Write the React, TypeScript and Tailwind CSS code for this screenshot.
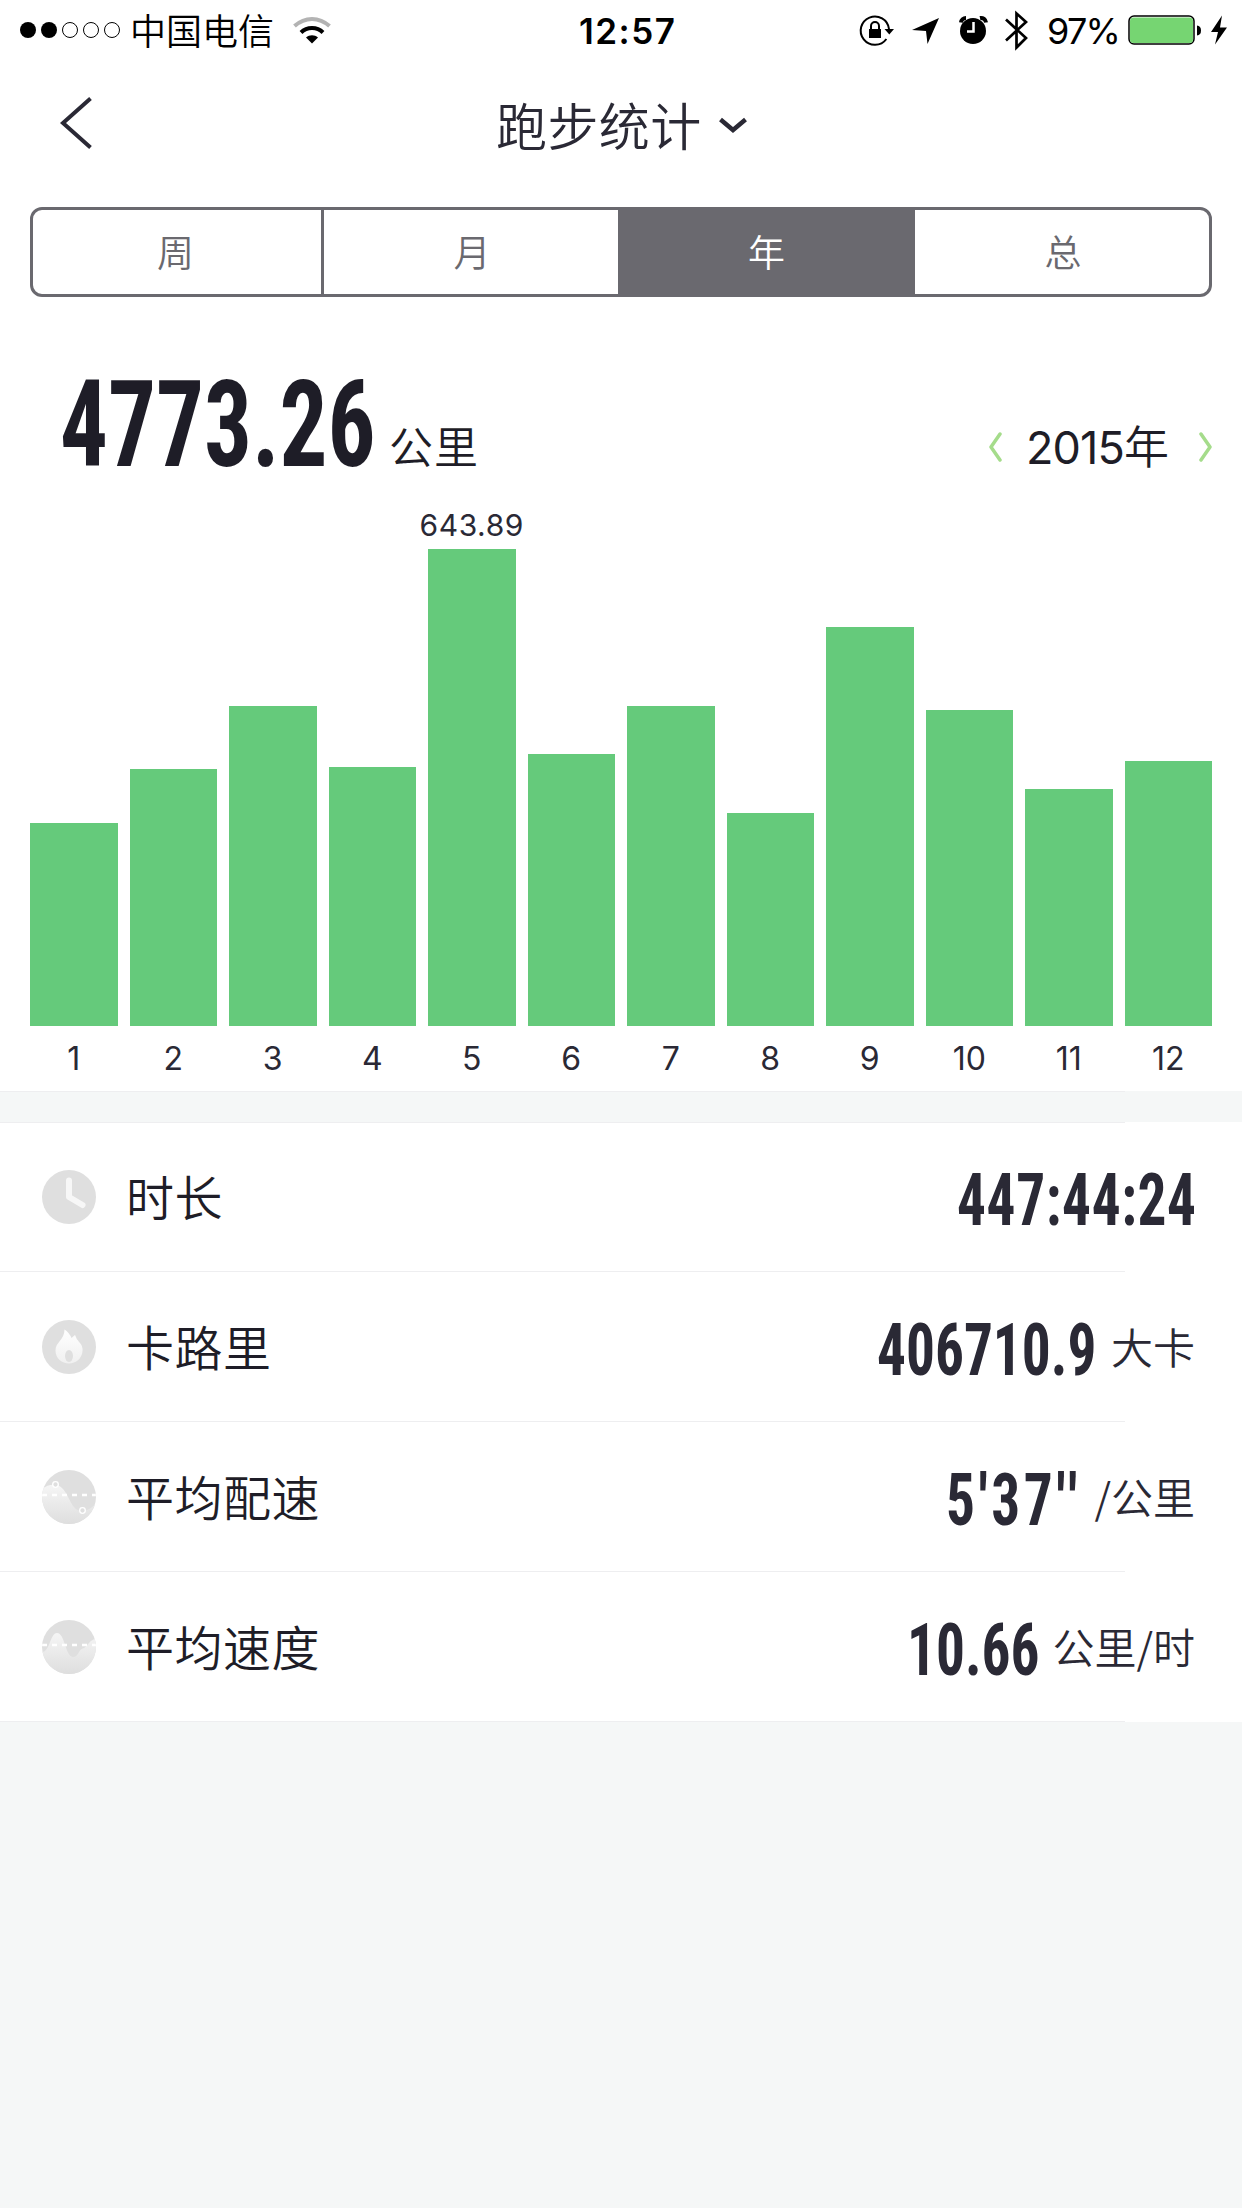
import React from 'react';

const bars = [
  { month: 1, height: 203 },
  { month: 2, height: 257 },
  { month: 3, height: 320 },
  { month: 4, height: 259 },
  { month: 5, height: 477, label: '643.89' },
  { month: 6, height: 272 },
  { month: 7, height: 320 },
  { month: 8, height: 213 },
  { month: 9, height: 399 },
  { month: 10, height: 316 },
  { month: 11, height: 237 },
  { month: 12, height: 265 },
];

function StatusBar() {
  return (
    <div className="flex h-[60px] items-center pl-5 pr-[14px] text-black">
      <div className="flex w-[559px] items-center">
        <div className="flex gap-[5px]">
          {[true, true, false, false, false].map((on, i) => (
            <span key={i} className={on ? 'size-4 rounded-full bg-black' : 'size-4 rounded-full border border-black'} />
          ))}
        </div>
        <span className="mb-0.5 ml-[10px] text-[36px] leading-[58px] font-[350] font-['Noto_Sans_CJK_SC',sans-serif]">中国电信</span>
        <svg className="ml-[19px] h-7 w-[38px]" viewBox="0 0 38 28" fill="none">
          <path d="M1.500 10C12 .5 26 .5 36.500 10" stroke="#b3b3b3" strokeWidth="4" />
          <path d="M8 16.500C14 10.500 24 10.500 30 16.500" stroke="#000" strokeWidth="4" />
          <path d="M13 21.500C16.500 18.500 21.500 18.500 25 21.500L19 27.500Z" fill="#000" />
        </svg>
      </div>
      <span className="mt-0.5 text-[35px] leading-[60px] font-semibold tracking-[1.500px] font-['Inter',sans-serif]">12:57</span>
      <div className="ml-auto flex items-center">
        <svg className="h-[42px] w-[172px]" viewBox="858 9 172 42" fill="none">
          <path d="M889 29a14.200 14.200 0 1 0-2.600 10" stroke="#000" strokeWidth="2" />
          <path d="M884.500 29h9.500l-4.700 5.500z" fill="#000" />
          <rect x="869" y="29" width="12" height="9" fill="#000" />
          <path d="M871 30v-4a4 4 0 0 1 8 0v4" stroke="#000" strokeWidth="2" />
          <path d="M939 18L912 30L926 31L927.500 44Z" fill="#000" />
          <circle cx="973" cy="31" r="13" fill="#000" />
          <path d="M961 22.500A5 5 0 0 1 966 18M980 18a5 5 0 0 1 6 4.500" stroke="#000" strokeWidth="4" />
          <path d="M973.500 22v9.500H967" stroke="#fff" strokeWidth="2.500" />
          <path d="M1006 19.500l20 18.500-9.500 9.500V13.500L1026 22l-20 18.500" stroke="#000" strokeWidth="2.700" />
        </svg>
        <span className="mt-0.5 ml-[17px] w-[69px] text-[36px] leading-[60px] tracking-[-1.700px] whitespace-nowrap font-['Inter',sans-serif]">97%</span>
        <svg className="ml-3 h-[30px] w-[100px]" viewBox="1128 15 100 30" fill="none">
          <rect x="1129" y="16" width="65" height="28" rx="5" stroke="#000" strokeWidth="1.500" />
          <rect x="1130" y="17.500" width="63" height="25.500" rx="3.500" fill="#76d572" />
          <path d="M1197 25.500q4 .5 4 5t-4 5z" fill="#000" />
          <path d="M1222 15.500l-11 16.500h7l-3 12.500 12-17h-7z" fill="#000" />
        </svg>
      </div>
    </div>
  );
}

function Header() {
  return (
    <header className="flex h-[147px] items-start text-[#2a2935]">
      <svg className="mt-9 ml-[60px] h-[54px] w-8" viewBox="0 0 32 54" fill="none" stroke="currentColor" strokeWidth="4">
        <path d="M30.500 2.500L3 27l27.500 24.500" />
      </svg>
      <h1 className="mt-[34px] ml-[404px] text-[51px] leading-[60px] font-[350] tracking-[0.400px] font-['Noto_Sans_CJK_SC',sans-serif]">跑步统计</h1>
      <svg className="mt-[57px] ml-[17px] h-[17px] w-[28px]" viewBox="0 0 28 17" fill="none" stroke="currentColor" strokeWidth="4.500">
        <path d="M1.500 2.500L14 13 26.500 2.500" />
      </svg>
    </header>
  );
}

function Tabs() {
  return (
    <div className="mx-[30px] flex h-[90px] overflow-hidden rounded-xl border-3 border-[#6a696f] text-center text-[37px] leading-[82px] font-[350] text-[#6a696f] font-['Noto_Sans_CJK_SC',sans-serif]">
      <div className="w-[291px] border-r-3 border-[#6a696f] pr-[3px]">周</div>
      <div className="w-[294px] pl-[2px]">月</div>
      <div className="w-[297px] bg-[#6a696f] text-white">年</div>
      <div className="w-[294px] pl-[2px]">总</div>
    </div>
  );
}

const digits = "inline-block origin-left font-bold whitespace-nowrap [font-stretch:75%] font-['Roboto',sans-serif]";

function Summary() {
  return (
    <div className="flex h-[213px] items-end pb-[16px] pl-[60px] text-[#1e1d27]">
      <div className="mb-1 h-[142px] w-[329px] text-[121px] leading-[142px]">
        <span className={`${digits} scale-x-[0.785]`}>4773.26</span>
      </div>
      <span className="mb-[17px] text-[44px] leading-[64px] font-[350] tracking-[1px] font-['Noto_Sans_CJK_SC',sans-serif]">公里</span>
      <div className="mr-[29px] mb-[13px] ml-auto flex items-center">
        <svg className="h-[30px] w-[14px]" viewBox="0 0 14 30" fill="none" stroke="#a5dc8b" strokeWidth="3.500" strokeLinecap="round" strokeLinejoin="round">
          <path d="M12 2L3 15l9 13" />
        </svg>
        <div className="ml-[24px] flex w-[146px] items-baseline text-[45px] leading-[66px]">
          <span className="tracking-[-0.900px] font-['Inter',sans-serif]">2015</span>
          <span className="font-[350] font-['Noto_Sans_CJK_SC',sans-serif]">年</span>
        </div>
        <svg className="ml-[27px] h-[30px] w-[14px]" viewBox="0 0 14 30" fill="none" stroke="#a5dc8b" strokeWidth="3.500" strokeLinecap="round" strokeLinejoin="round">
          <path d="M2 2l9 13-9 13" />
        </svg>
      </div>
    </div>
  );
}

function Chart() {
  return (
    <div className="mx-[30px] flex h-[581px] items-end justify-between text-[#2a2935] font-['Inter',sans-serif]">
      {bars.map((b) => (
        <div key={b.month} className="flex w-[87.500px] flex-col items-center">
          {b.label && <span className="text-[30px] leading-[48px] tracking-[0.600px]">{b.label}</span>}
          <div className="w-full bg-[#65ca7b]" style={{ height: b.height }} />
          <span className="h-[65px] text-[32px] leading-[66px]">{b.month}</span>
        </div>
      ))}
    </div>
  );
}

function ClockIcon() {
  return (
    <svg className="size-[54px]" viewBox="0 0 54 54" fill="none">
      <circle cx="27" cy="27" r="27" fill="#dfdfdf" />
      <path d="M27 10.500V27l13.500 8" stroke="#f7f7f7" strokeWidth="6" strokeLinecap="round" strokeLinejoin="round" />
    </svg>
  );
}

function FlameIcon() {
  return (
    <svg className="size-[54px]" viewBox="0 0 54 54" fill="none">
      <defs>
        <linearGradient id="flame" x1="0" y1="0" x2="0" y2="1">
          <stop offset="0" stopColor="#fff" />
          <stop offset="1" stopColor="#f0f0f0" />
        </linearGradient>
      </defs>
      <circle cx="27" cy="27" r="27" fill="#dfdfdf" />
      <path d="M22.500 9.500Q27.500 13 29.500 18L33 15q1 3.500 4.500 7.500Q41 26 40.500 31C40 38.500 34 43.500 27 43.500S13.500 38.500 13.500 30.500C13.500 22 22.500 20 22.500 9.500Z" fill="url(#flame)" />
      <ellipse cx="27" cy="36" rx="4" ry="6" fill="#dfdfdf" />
    </svg>
  );
}

function PaceIcon() {
  return (
    <svg className="size-[54px]" viewBox="0 0 54 54" fill="none">
      <defs>
        <linearGradient id="pace" x1="0" y1="14" x2="0" y2="54" gradientUnits="userSpaceOnUse">
          <stop offset="0" stopColor="#f6f6f6" />
          <stop offset="1" stopColor="#dedede" />
        </linearGradient>
        <clipPath id="pace-clip"><circle cx="27" cy="27" r="27" /></clipPath>
      </defs>
      <circle cx="27" cy="27" r="27" fill="#dfdfdf" />
      <g clipPath="url(#pace-clip)">
        <path d="M0 19C6 14 15 13 20 18C28 26 29 40 39 41C46 41 51 37 54 33V54H0Z" fill="url(#pace)" />
        <path d="M0 25h54" stroke="#fff" strokeWidth="2.500" strokeDasharray="5 5" />
      </g>
      <circle cx="13.500" cy="14.500" r="2.800" fill="#dfdfdf" stroke="#fff" strokeWidth="1.300" />
      <circle cx="40.500" cy="40.500" r="2.800" fill="#dfdfdf" stroke="#fff" strokeWidth="1.300" />
    </svg>
  );
}

function SpeedIcon() {
  return (
    <svg className="size-[54px]" viewBox="0 0 54 54" fill="none">
      <defs>
        <linearGradient id="speed" x1="0" y1="12" x2="0" y2="54" gradientUnits="userSpaceOnUse">
          <stop offset="0" stopColor="#f6f6f6" />
          <stop offset="1" stopColor="#dedede" />
        </linearGradient>
        <clipPath id="speed-clip"><circle cx="27" cy="27" r="27" /></clipPath>
      </defs>
      <circle cx="27" cy="27" r="27" fill="#dfdfdf" />
      <g clipPath="url(#speed-clip)">
        <path d="M0 32C8 32 8 13 15 13C23 13 23 36 31 37C37 37 36 29 42 28C46 26 48 19 54 19V54H0Z" fill="url(#speed)" />
        <path d="M0 25h54" stroke="#fff" strokeWidth="2.500" strokeDasharray="5 5" />
      </g>
    </svg>
  );
}

const rows = [
  { icon: <ClockIcon />, label: '时长', value: '447:44:24', box: 'w-[238px] tracking-[0.800px]', unit: '' },
  { icon: <FlameIcon />, label: '卡路里', value: '406710.9', box: 'w-[234px]', unit: '大卡' },
  { icon: <PaceIcon />, label: '平均配速', value: "5'37''", box: 'w-[149px] tracking-[4.500px]', unit: '/公里' },
  { icon: <SpeedIcon />, label: '平均速度', value: '10.66', box: 'w-[146px]', unit: '公里/时' },
];

function Divider() {
  return <div className="h-px w-[1125px] bg-[#eeeef0]" />;
}

export default function App() {
  return (
    <div className="min-h-[2208px] w-[1242px] bg-[#f5f7f7]">
      <div className="bg-white">
        <StatusBar />
        <Header />
        <Tabs />
        <Summary />
        <Chart />
      </div>
      <div className="h-[31px]"><Divider /></div>
      <div className="bg-white">
        <Divider />
        {rows.map((r, i) => (
          <div key={r.label}>
            <div className={i === 0 ? 'flex h-[148px] items-center pl-[42px] pr-[47px]' : 'flex h-[149px] items-center pl-[42px] pr-[47px]'}>
              {r.icon}
              <span className="mb-1 ml-[30px] text-[48px] leading-[70px] font-[350] tracking-[0.500px] text-[#1e1d27] font-['Noto_Sans_CJK_SC',sans-serif]">{r.label}</span>
              <div className="ml-auto flex items-center text-[#2a2935]">
                <div className={`${r.box} h-[86px] text-[73px] leading-[86px]`}>
                  <span className={`${digits} scale-x-[0.785]`}>{r.value}</span>
                </div>
                {r.unit && (
                  <span className="mb-0.5 text-[42px] leading-[62px] font-[350] font-['Noto_Sans_CJK_SC',sans-serif]">{r.unit}</span>
                )}
              </div>
            </div>
            <Divider />
          </div>
        ))}
      </div>
    </div>
  );
}
